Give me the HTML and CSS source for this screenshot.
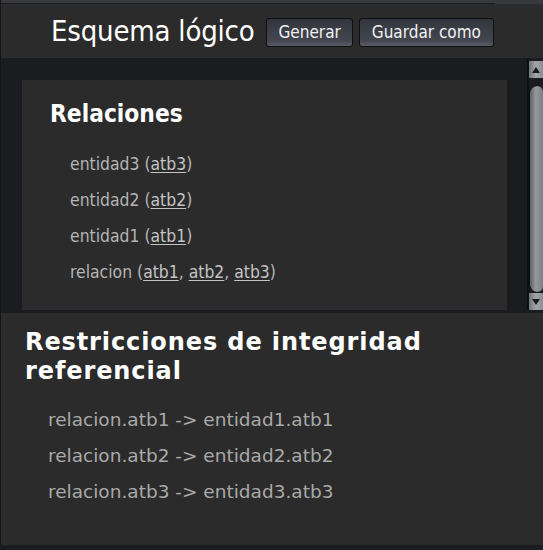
FILE: index.html
```html
<!DOCTYPE html>
<html lang="es">
<head>
<meta charset="utf-8">
<title>Esquema lógico</title>
<link rel="stylesheet" href="styles.css">
</head>
<body>
<div class="app">
  <div class="topstrip"><div class="topline"></div></div>
  <header class="header">
    <h1 class="title">Esquema lógico</h1>
    <button class="btn">Generar</button>
    <button class="btn">Guardar como</button>
  </header>
  <div class="mainrow">
    <div class="scrollarea">
      <section class="card">
        <h2 class="card-title">Relaciones</h2>
        <ul class="rels">
          <li>entidad3 (<u>atb3</u>)</li>
          <li>entidad2 (<u>atb2</u>)</li>
          <li>entidad1 (<u>atb1</u>)</li>
          <li>relacion (<u>atb1</u>, <u>atb2</u>, <u>atb3</u>)</li>
        </ul>
      </section>
    </div>
    <div class="scrollbar">
      <div class="sb-btn sb-up"><span class="tri-up"></span></div>
      <div class="sb-track"><div class="sb-thumb"></div></div>
      <div class="sb-btn sb-down"><span class="tri-down"></span></div>
    </div>
  </div>
  <section class="bottom">
    <h2 class="bottom-title">Restricciones de integridad referencial</h2>
    <ul class="fks">
      <li>relacion.atb1 -&gt; entidad1.atb1</li>
      <li>relacion.atb2 -&gt; entidad2.atb2</li>
      <li>relacion.atb3 -&gt; entidad3.atb3</li>
    </ul>
  </section>
</div>
</body>
</html>
```
FILE: styles.css
```css
html, body {
  margin: 0;
  padding: 0;
  background: #1b1c1f;
  height: 550px;
  overflow: hidden;
}
.app {
  display: flex;
  flex-direction: column;
  height: 545px;
  border-left: 1px solid #141416;
  box-sizing: border-box;
  font-family: "DejaVu Sans Condensed", "DejaVu Sans", sans-serif;
}
.topstrip {
  height: 4px;
  background: #38393e;
  display: flex;
  flex-direction: column;
  justify-content: flex-end;
}
.topline {
  height: 1px;
  width: 494px;
  background: #1d1e21;
}
.header {
  height: 54px;
  background: #2b2b2b;
  display: flex;
  align-items: center;
  padding-left: 50px;
  box-sizing: border-box;
}
.title {
  margin: 0 12px 0 0;
  font-weight: normal;
  font-size: 29px;
  color: #ffffff;
  letter-spacing: -0.2px;
}
.btn {
  font-family: "DejaVu Sans Condensed", "DejaVu Sans", sans-serif;
  font-size: 17px;
  color: #f2f2f2;
  height: 29px;
  padding: 0 11px;
  margin-right: 6px;
  margin-top: 2px;
  border: 1px solid #0e0e10;
  border-radius: 3px;
  background: linear-gradient(#33363d, #43464e 80%, #5a5d65);
}
.btn + .btn {
  padding: 0 12px;
}
.mainrow {
  height: 252px;
  display: flex;
}
.scrollarea {
  flex: 1;
  padding: 22px 20px 0 21px;
  overflow: hidden;
}
.card {
  background: #2b2b2b;
  height: 240px;
  padding: 22px 28px 0 28px;
  box-sizing: border-box;
}
.card-title {
  margin: 0;
  font-size: 24.3px;
  font-weight: bold;
  color: #ffffff;
  line-height: 24px;
}
.rels {
  list-style: none;
  margin: 28px 0 0 0;
  padding: 0 0 0 20px;
  font-size: 17.4px;
  color: #b5b5b5;
}
.rels li {
  height: 36px;
  line-height: 20px;
}
.rels u {
  color: #c4c4c4;
  text-decoration-thickness: 1px;
  text-underline-offset: 2px;
}
.scrollbar {
  width: 14px;
  display: flex;
  flex-direction: column;
  padding-top: 3px;
  background: #1b1c1f;
  border-left: 2px solid #0f1012;
}
.sb-btn {
  height: 17px;
  background: linear-gradient(90deg, #6f7378, #a3a7ab 50%, #8a8e93);
  display: flex;
  align-items: center;
  justify-content: center;
}
.tri-up {
  width: 0; height: 0;
  border-left: 4px solid transparent;
  border-right: 4px solid transparent;
  border-bottom: 6px solid #1a1a1a;
}
.tri-down {
  width: 0; height: 0;
  border-left: 4px solid transparent;
  border-right: 4px solid transparent;
  border-top: 6px solid #1a1a1a;
}
.sb-track {
  flex: 1;
  padding: 8px 0 1px 0;
  display: flex;
  background: #1a1b1e;
}
.sb-thumb {
  flex: 1;
  border-radius: 9px 6px 6px 9px / 8px 6px 6px 8px;
  background: linear-gradient(90deg, #5c5f63, #95989c 45%, #7b7e82);
  border-left: 1px solid #101113;
}
.bottom {
  margin-top: 3px;
  flex: 1;
  background: #2b2b2b;
  padding: 15px 20px 0 24px;
  font-family: "DejaVu Sans", sans-serif;
}
.bottom-title {
  margin: 0;
  font-size: 24px;
  font-weight: bold;
  color: #ffffff;
  line-height: 29px;
  letter-spacing: 0.9px;
}
.fks {
  list-style: none;
  margin: 24px 0 0 0;
  padding: 0 0 0 23px;
  font-size: 18.5px;
  color: #a9a9a9;
}
.fks li {
  height: 36px;
  line-height: 20px;
}
```
